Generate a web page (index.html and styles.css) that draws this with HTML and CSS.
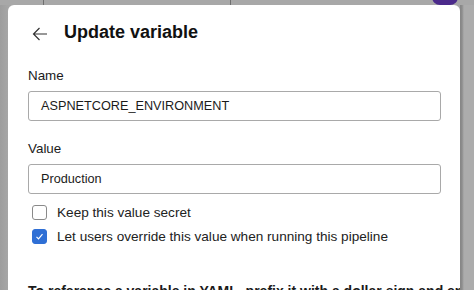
FILE: index.html
```html
<!DOCTYPE html>
<html lang="en">
<head>
  <meta charset="UTF-8">
  <meta name="viewport" content="width=device-width, initial-scale=1.0">
  <title>Update variable</title>
  <link rel="stylesheet" href="styles.css">
</head>
<body>
  <div class="page-strip">
    <span class="strip-cell cell1"></span>
    <span class="strip-cell cell2"></span>
    <span class="strip-cell cell3"></span>
    <span class="avatar"></span>
  </div>
  <div class="backdrop">
    <div class="panel">
      <div class="panel-head">
        <button class="back-btn">
          <svg width="16" height="14" viewBox="0 0 16 14">
            <path d="M15 7H1.5M7.5 1L1.5 7l6 6" fill="none" stroke="#333" stroke-width="1.2"/>
          </svg>
        </button>
        <h1 class="title">Update variable</h1>
      </div>

      <div class="field">
        <label class="field-label">Name</label>
        <div class="text-box">ASPNETCORE_ENVIRONMENT</div>
      </div>

      <div class="field field-value">
        <label class="field-label">Value</label>
        <div class="text-box">Production</div>
      </div>

      <div class="checks">
        <div class="check-row">
          <span class="check-box"></span>
          <span class="check-text">Keep this value secret</span>
        </div>
        <div class="check-row">
          <span class="check-box checked">
            <svg width="11" height="11" viewBox="0 0 11 11">
              <path d="M2.5 5.8l2 2 4-4.6" fill="none" stroke="#fff" stroke-width="1.2"/>
            </svg>
          </span>
          <span class="check-text">Let users override this value when running this pipeline</span>
        </div>
      </div>

      <p class="hint">To reference a variable in YAML, prefix it with a dollar sign and enclose it in parentheses.</p>
    </div>
  </div>
</body>
</html>
```

FILE: styles.css
```css
* {
  box-sizing: border-box;
}
body {
  margin: 0;
  height: 290px;
  overflow: hidden;
  background-color: #a3a3a3;
  font-family: "Liberation Sans", Arial, sans-serif;
  color: #1b1b1b;
}
.page-strip {
  position: relative;
  display: flex;
  height: 5px;
  background-color: #a8a8a8;
}
.strip-cell {
  height: 5px;
  border-right: 1px solid #6f6f6f;
}
.cell1 {
  width: 44px;
}
.cell2 {
  width: 187px;
}
.cell3 {
  flex: 1;
  border-right: none;
}
.avatar {
  position: absolute;
  top: -20px;
  left: 432px;
  width: 26px;
  height: 25px;
  border-radius: 8px;
  background-color: #4b2a8b;
}
.backdrop {
  padding: 0 14px 0 8px;
  background: linear-gradient(to right, #9d9d9d 0, #a6a6a6 8px, #a6a6a6 460px, #858585 460px, #8d8d8d 462px, #acacac 464px);
}
.panel {
  height: 285px;
  overflow: hidden;
  padding: 15px 19px 0 20px;
  background-color: #fff;
  border-radius: 6px 6px 0 0;
}
.panel-head {
  display: flex;
  align-items: center;
  gap: 12px;
  height: 24px;
}
.back-btn {
  display: flex;
  align-items: center;
  justify-content: center;
  width: 24px;
  height: 24px;
  margin-top: 3px;
  padding: 0;
  border: none;
  background: none;
}
.title {
  margin: 0;
  font-size: 18px;
  line-height: 24px;
  font-weight: bold;
  color: #111;
}
.field {
  margin-top: 23px;
}
.field-value {
  margin-top: 19px;
}
.field-label {
  display: block;
  margin-bottom: 6px;
  font-size: 13.4px;
  line-height: 18px;
}
.text-box {
  height: 30px;
  padding: 0 12px;
  border: 1px solid #a9a9a9;
  border-radius: 3px;
  font-size: 12.7px;
  line-height: 28px;
  color: #1b1b1b;
}
.checks {
  margin-top: 6px;
  padding-left: 4px;
}
.check-row {
  display: flex;
  align-items: center;
  gap: 10px;
  height: 24px;
}
.check-box {
  display: flex;
  align-items: center;
  justify-content: center;
  width: 15px;
  height: 15px;
  border: 1px solid #8a8a8a;
  border-radius: 3px;
  background-color: #fff;
}
.check-box.checked {
  border-color: #2f6fd5;
  background-color: #2f6fd5;
}
.check-text {
  font-size: 13.6px;
  color: #222;
}
.hint {
  margin: 33px 0 0;
  font-size: 14px;
  line-height: 20px;
  font-weight: bold;
  white-space: nowrap;
}
```
